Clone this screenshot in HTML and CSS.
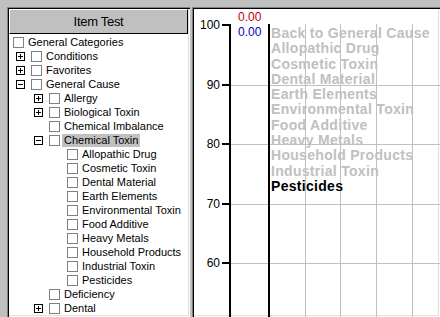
FILE: index.html
```html
<!DOCTYPE html>
<html lang="en">
<head>
    <meta charset="UTF-8">
    <title>Item Test</title>
    <link rel="stylesheet" href="styles.css">
</head>
<body>
    <div class="window">
        <div class="side sunken">
            <div class="side-head">Item Test</div>
            <ul class="tree">
                <li class="node lv0"><span class="check"></span><span class="label">General Categories</span></li>
                <li class="node lv1"><span class="exp"><svg width="9" height="9"><rect x="0.5" y="0.5" width="8" height="8"/><path d="M2 4.5H7M4.5 2V7"/></svg></span><span class="check"></span><span class="label">Conditions</span></li>
                <li class="node lv1"><span class="exp"><svg width="9" height="9"><rect x="0.5" y="0.5" width="8" height="8"/><path d="M2 4.5H7M4.5 2V7"/></svg></span><span class="check"></span><span class="label">Favorites</span></li>
                <li class="node lv1"><span class="exp"><svg width="9" height="9"><rect x="0.5" y="0.5" width="8" height="8"/><path d="M2 4.5H7"/></svg></span><span class="check"></span><span class="label">General Cause</span></li>
                <li class="node lv2"><span class="exp"><svg width="9" height="9"><rect x="0.5" y="0.5" width="8" height="8"/><path d="M2 4.5H7M4.5 2V7"/></svg></span><span class="check"></span><span class="label">Allergy</span></li>
                <li class="node lv2"><span class="exp"><svg width="9" height="9"><rect x="0.5" y="0.5" width="8" height="8"/><path d="M2 4.5H7M4.5 2V7"/></svg></span><span class="check"></span><span class="label">Biological Toxin</span></li>
                <li class="node lv2"><span class="exp"></span><span class="check"></span><span class="label">Chemical Imbalance</span></li>
                <li class="node lv2"><span class="exp"><svg width="9" height="9"><rect x="0.5" y="0.5" width="8" height="8"/><path d="M2 4.5H7"/></svg></span><span class="check"></span><span class="label selected">Chemical Toxin</span></li>
                <li class="node lv3"><span class="exp"></span><span class="check"></span><span class="label">Allopathic Drug</span></li>
                <li class="node lv3"><span class="exp"></span><span class="check"></span><span class="label">Cosmetic Toxin</span></li>
                <li class="node lv3"><span class="exp"></span><span class="check"></span><span class="label">Dental Material</span></li>
                <li class="node lv3"><span class="exp"></span><span class="check"></span><span class="label">Earth Elements</span></li>
                <li class="node lv3"><span class="exp"></span><span class="check"></span><span class="label">Environmental Toxin</span></li>
                <li class="node lv3"><span class="exp"></span><span class="check"></span><span class="label">Food Additive</span></li>
                <li class="node lv3"><span class="exp"></span><span class="check"></span><span class="label">Heavy Metals</span></li>
                <li class="node lv3"><span class="exp"></span><span class="check"></span><span class="label">Household Products</span></li>
                <li class="node lv3"><span class="exp"></span><span class="check"></span><span class="label">Industrial Toxin</span></li>
                <li class="node lv3"><span class="exp"></span><span class="check"></span><span class="label">Pesticides</span></li>
                <li class="node lv2"><span class="exp"></span><span class="check"></span><span class="label">Deficiency</span></li>
                <li class="node lv2"><span class="exp"><svg width="9" height="9"><rect x="0.5" y="0.5" width="8" height="8"/><path d="M2 4.5H7M4.5 2V7"/></svg></span><span class="check"></span><span class="label">Dental</span></li>
                <li class="node lv2"><span class="exp"></span><span class="check"></span></li>
            </ul>
        </div>
        <div class="graph sunken">
            <!-- grid lines, positions relative to the panel -->
            <div class="hline" style="top: 78px"></div>
            <div class="hline" style="top: 137px"></div>
            <div class="hline" style="top: 197px"></div>
            <div class="hline" style="top: 256px"></div>
            <div class="vline" style="left: 113px"></div>
            <div class="vline" style="left: 148px"></div>
            <div class="vline" style="left: 184px"></div>
            <div class="vline" style="left: 220px"></div>

            <div class="axis" style="left: 37px"></div>
            <div class="axis" style="left: 76px"></div>

            <div class="tick" style="top: 17px"><span>100</span></div>
            <div class="tick" style="top: 77px"><span>90</span></div>
            <div class="tick" style="top: 136px"><span>80</span></div>
            <div class="tick" style="top: 196px"><span>70</span></div>
            <div class="tick" style="top: 255px"><span>60</span></div>

            <div class="val val-red">0.00</div>
            <div class="val val-blue">0.00</div>

            <ul class="items">
                <li>Back to General Cause</li>
                <li>Allopathic Drug</li>
                <li>Cosmetic Toxin</li>
                <li>Dental Material</li>
                <li>Earth Elements</li>
                <li>Environmental Toxin</li>
                <li>Food Additive</li>
                <li>Heavy Metals</li>
                <li>Household Products</li>
                <li>Industrial Toxin</li>
                <li class="current">Pesticides</li>
            </ul>
        </div>
    </div>
</body>
</html>
```

FILE: styles.css
```css
body {
    margin: 0;
    background: #c0c0c0;
    font-family: "Liberation Sans", Arial, sans-serif;
    color: #000;
    overflow: hidden;
}

.window {
    display: flex;
    gap: 2px;
    height: 317px;
    padding: 7px 0 0 7px;
    box-sizing: border-box;
}

.sunken {
    padding: 2px;
    box-shadow: inset 1px 1px 0 #808080, inset 2px 2px 0 #000,
                inset -1px -1px 0 #fff, inset -2px -2px 0 #dfdfdf;
}

.side {
    width: 183px;
    box-sizing: border-box;
    display: flex;
    flex-direction: column;
}

.side-head {
    height: 25px;
    box-sizing: border-box;
    display: flex;
    align-items: center;
    justify-content: center;
    background: #c0c0c0;
    border-top: 1px solid #fff;
    border-left: 1px solid #fff;
    border-right: 1px solid #000;
    border-bottom: 1px solid #000;
    font-size: 13px;
    letter-spacing: -0.3px;
}

.tree {
    flex: 1;
    margin: 0;
    padding: 1px 0 0;
    list-style: none;
    background: #fff;
    overflow: hidden;
    font-size: 11px;
}

.node {
    display: flex;
    align-items: center;
    height: 14px;
    white-space: nowrap;
}

.lv0 { padding-left: 4px; }
.lv1 { padding-left: 7px; }
.lv2 { padding-left: 25px; }
.lv3 { padding-left: 43px; }

.exp {
    width: 9px;
    height: 9px;
    margin: 1px 6px 0 0;
    flex: none;
}

.exp svg {
    display: block;
}

.exp rect {
    fill: #fff;
    stroke: #000;
}

.exp path {
    stroke: #000;
    stroke-width: 1;
}

.check {
    width: 11px;
    height: 11px;
    box-sizing: border-box;
    border: 1px solid #808080;
    background: #fff;
    flex: none;
}

.label {
    margin-left: 2px;
    padding: 0 2px;
    line-height: 13px;
}

.label.selected {
    background: #c0c0c0;
}

.graph {
    flex: 1;
    position: relative;
    background: #fff;
    overflow: hidden;
}

.hline {
    position: absolute;
    left: 39px;
    right: 0;
    height: 1px;
    background: #c0c0c0;
}

.vline {
    position: absolute;
    top: 17px;
    bottom: 0;
    width: 1px;
    background: #c0c0c0;
}

.axis {
    position: absolute;
    top: 17px;
    bottom: 0;
    width: 2px;
    background: #000;
}

.tick {
    position: absolute;
    left: 30px;
    width: 7px;
    height: 2px;
    background: #000;
}

.tick span {
    position: absolute;
    right: 9px;
    top: -5px;
    font-size: 12px;
    line-height: 12px;
}

.val {
    position: absolute;
    left: 46px;
    font-size: 12px;
    line-height: 12px;
}

.val-red {
    top: 4px;
    color: #c00000;
}

.val-blue {
    top: 19px;
    color: #0000c0;
}

.items {
    position: absolute;
    left: 79px;
    top: 19px;
    margin: 0;
    padding: 0;
    list-style: none;
    font-size: 14px;
    font-weight: bold;
    line-height: 15.3px;
    letter-spacing: 0.3px;
    color: #c0c0c0;
    white-space: nowrap;
}

.items .current {
    color: #000;
}
```
